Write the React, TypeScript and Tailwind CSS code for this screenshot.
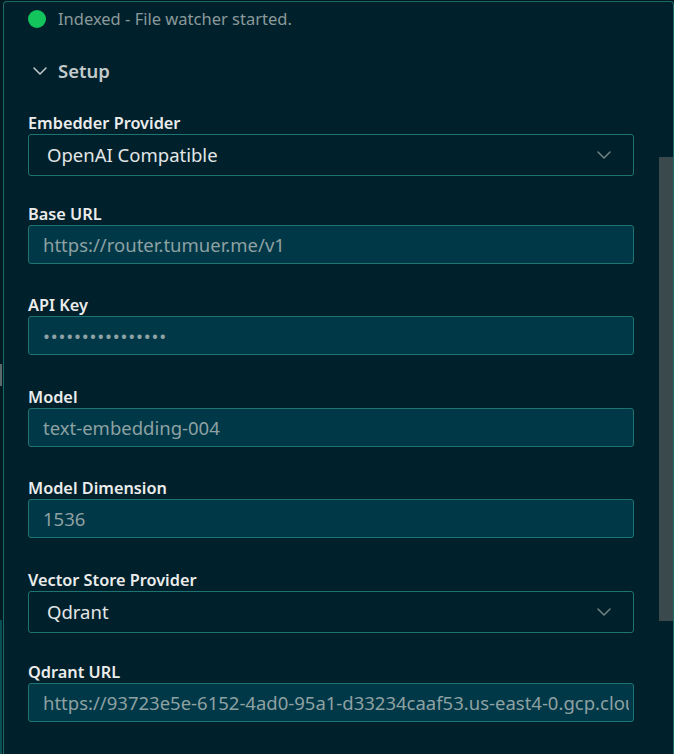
import React from "react";

const font = { fontFamily: '"Noto Sans", "Open Sans", sans-serif' };

function Chevron({ className }: { className?: string }) {
  return (
    <svg className={className} viewBox="0 0 14 8" fill="none">
      <path d="M1 1 L7 7 L13 1" stroke="currentColor" strokeWidth="1.5" strokeLinecap="round" strokeLinejoin="round" />
    </svg>
  );
}

type Field = { label: string; kind: "select" | "input"; value: string; mt: string; secret?: boolean };

const fields: Field[] = [
  { label: "Embedder Provider", kind: "select", value: "OpenAI Compatible", mt: "mt-[28px]" },
  { label: "Base URL", kind: "input", value: "https://router.tumuer.me/v1", mt: "mt-[28px]" },
  { label: "API Key", kind: "input", value: "••••••••••••••••", mt: "mt-[31px]", secret: true },
  { label: "Model", kind: "input", value: "text-embedding-004", mt: "mt-[32px]" },
  { label: "Model Dimension", kind: "input", value: "1536", mt: "mt-[31px]" },
  { label: "Vector Store Provider", kind: "select", value: "Qdrant", mt: "mt-[32px]" },
  {
    label: "Qdrant URL",
    kind: "input",
    value: "https://93723e5e-6152-4ad0-95a1-d33234caaf53.us-east4-0.gcp.cloud.qdrant.io:6333",
    mt: "mt-[29px]",
  },
];

export default function App() {
  return (
    <div className="w-[674px] h-[754px] bg-[#011a21] relative overflow-hidden" style={font}>
      <div className="absolute left-0 top-[364px] w-[2px] h-[22px] bg-[#5a6a6c]" />
      <div className="absolute left-0 top-[620px] w-[2px] h-[134px] bg-[#0b4f56]" />
      <div className="ml-[3px] mt-[1px] h-[753px] border-l border-t border-r border-[#1b6a66] rounded-tl-[4px] rounded-tr-[4px] bg-[#00212b] relative overflow-hidden">
        <div className="absolute right-0 top-[155px] w-[14px] h-[464px] bg-[#3a4a4c]" />
        <div className="pl-[24px]">
          <div className="pt-[5px] h-[29px] flex items-center">
            <div className="w-[18px] h-[18px] rounded-full bg-[#12c45b]" />
            <span className="ml-[12px] text-[16.5px] text-[#8b999b] leading-[24px]">Indexed - File watcher started.</span>
          </div>
          <div className="mt-[26px] h-[28px] flex items-center">
            <Chevron className="ml-[5px] w-[14px] h-[8px] text-[#c3cacc]" />
            <span className="ml-[11px] text-[18.5px] font-semibold text-[#c3cacc]">Setup</span>
          </div>
          <div className="w-[606px]">
            {fields.map((f) => (
              <div key={f.label} className={f.mt}>
                <div className="h-[20px] leading-[20px] text-[16.3px] font-semibold text-[#ececec]">{f.label}</div>
                {f.kind === "select" ? (
                  <div className="mt-[1px] h-[42px] border border-[#1e7470] rounded-[3px] flex items-center justify-between pl-[18px] pr-[22px]">
                    <span className="text-[18.5px] text-[#e3e6e6]">{f.value}</span>
                    <Chevron className="w-[14px] h-[8px] text-[#6f8385]" />
                  </div>
                ) : (
                  <div className="mt-[1px] h-[39px] border border-[#1e7470] rounded-[3px] bg-[#003847] flex items-center pl-[14px] pr-[4px] overflow-hidden">
                    <input
                      readOnly
                      value={f.value}
                      className={
                        f.secret
                          ? "w-full bg-transparent outline-none text-[18.5px] tracking-[0.8px] text-[#8ea1a3]"
                          : "w-full bg-transparent outline-none text-[18.5px] text-[#8ea1a3]"
                      }
                      style={font}
                    />
                  </div>
                )}
              </div>
            ))}
          </div>
        </div>
      </div>
    </div>
  );
}
